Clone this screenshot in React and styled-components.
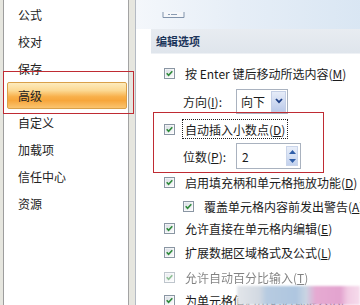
import React from 'react';
import styled, { createGlobalStyle } from 'styled-components';

const Global = createGlobalStyle`
  html, body { margin: 0; padding: 0; }
  body {
    width: 360px;
    height: 305px;
    overflow: hidden;
    background: #e6e6df;
    font-family: "Noto Sans CJK SC", "Noto Sans", sans-serif;
  }
`;

const Frame = styled.div`
  position: relative;
  display: flex;
  width: 360px;
  height: 305px;
  overflow: hidden;
  background: #e6e6df;
`;

const Sidebar = styled.nav`
  box-sizing: border-box;
  margin-left: 3px;
  width: 126px;
  flex: none;
  border-left: 1px solid #9d9d9d;
  border-right: 1px solid #a3a3a3;
  background: #fff;
  display: flex;
  flex-direction: column;
  padding-top: 1px;
`;

const NavItem = styled.div`
  box-sizing: border-box;
  height: 27px;
  display: flex;
  align-items: center;
  font-size: 12px;
  color: #222;
  padding-left: ${(p) => (p.$active ? '10px' : '14px')};
  margin: ${(p) => (p.$active ? '0 1px 0 3px' : '0')};
  border: ${(p) => (p.$active ? '1px solid #d9a04a' : 'none')};
  border-radius: 2px;
  background: ${(p) =>
    p.$active
      ? 'linear-gradient(to bottom, #fdebbd 0%, #fcd993 30%, #f8b04a 55%, #f7a63c 70%, #fac470 100%)'
      : 'transparent'};
`;

const Content = styled.main`
  box-sizing: border-box;
  margin-left: 6px;
  flex: 1;
  border-left: 1px solid #b4bac3;
  background: #fff;
  display: flex;
  flex-direction: column;
`;

const TopBand = styled.div`
  height: 29px;
  flex: none;
  padding-left: 26px;
  background: linear-gradient(to right, #f4f7fb 0%, #e6eef7 45%, #d9e6f3 100%);
`;

const Heading = styled.div`
  height: 25px;
  flex: none;
  margin-left: 15px;
  padding-left: 5px;
  display: flex;
  align-items: center;
  background: linear-gradient(to bottom, #e8ecf1, #dfe5ec);
  border-bottom: 1px solid #eef1f5;
  box-sizing: border-box;
  font-size: 11px;
  font-weight: 700;
  color: #1c355a;
`;

const Options = styled.div`
  display: flex;
  flex-direction: column;
  padding-top: 5px;
`;

const Row = styled.div`
  height: ${(p) => p.$h}px;
  flex: none;
  display: flex;
  align-items: center;
  padding-left: ${(p) => p.$indent}px;
  font-size: 12px;
  color: #1b1b1b;
  white-space: nowrap;
  opacity: ${(p) => (p.$faded ? 0.55 : 1)};
`;

const BoxWrap = styled.span`
  display: inline-flex;
  width: 11px;
  height: 11px;
  margin-right: 10px;
  flex: none;
`;

const Focus = styled.span`
  display: inline-flex;
  align-items: center;
  height: 20px;
  box-sizing: border-box;
  padding: 0 2px;
  margin-left: -3px;
  border: 1px dotted #222;
`;

const FieldLabel = styled.span`
  width: 53px;
  flex: none;
`;

const Select = styled.div`
  box-sizing: border-box;
  width: 52px;
  height: 25px;
  border: 1px solid #a9b2bf;
  background: #fff;
  display: flex;
  align-items: stretch;
  padding: 1px;
`;

const SelectText = styled.span`
  flex: 1;
  display: flex;
  align-items: center;
  padding-left: 3px;
`;

const DropBtn = styled.span`
  width: 15px;
  display: flex;
  align-items: center;
  justify-content: center;
  background: linear-gradient(to bottom, #e6ecf8, #bccbea);
  border: 1px solid #c4cfe6;
  box-sizing: border-box;
`;

const Spin = styled.div`
  box-sizing: border-box;
  width: 65px;
  height: 26px;
  border: 1px solid #a9b2bf;
  background: #fff;
  display: flex;
  align-items: stretch;
  padding: 2px;
`;

const SpinBtns = styled.span`
  width: 12px;
  display: flex;
  flex-direction: column;
  background: linear-gradient(to bottom, #e8eef9, #c3d2ee);
  border: 1px solid #cad5ea;
  box-sizing: border-box;
`;

const SpinHalf = styled.span`
  flex: 1;
  display: flex;
  align-items: center;
  justify-content: center;
`;

const U = styled.span`
  text-decoration: underline;
`;

const RedMark = styled.div`
  position: absolute;
  left: ${(p) => p.$x}px;
  top: ${(p) => p.$y}px;
  width: ${(p) => p.$w}px;
  height: ${(p) => p.$h}px;
  box-sizing: border-box;
  border: 1px solid #bf2b33;
  pointer-events: none;
`;

const Watermark = styled.div`
  position: absolute;
  left: 237px;
  top: 286px;
  width: 123px;
  height: 19px;
  filter: blur(1px);
  background: linear-gradient(
    to right,
    #e3e6ea 0%,
    #d2d9e2 18%,
    #b7cbe1 24%,
    #aec6e0 48%,
    #c9d5e3 56%,
    #e6aad2 64%,
    #e3a3cf 84%,
    #f1cbe3 90%,
    #f6dcec 100%
  );
`;

const Check = () => (
  <BoxWrap>
    <svg width="11" height="11" viewBox="0 0 11 11">
      <defs>
        <linearGradient id="cbg" x1="0" y1="0" x2="1" y2="1">
          <stop offset="0" stopColor="#d9dee5" />
          <stop offset="1" stopColor="#fbfbfc" />
        </linearGradient>
      </defs>
      <rect x="0.5" y="0.5" width="10" height="10" fill="#fff" stroke="#8a96a3" />
      <rect x="1.5" y="1.5" width="8" height="8" fill="url(#cbg)" />
      <path d="M2.7 5.3 L4.6 7.4 L8.3 3.3" fill="none" stroke="#2e8a3a" strokeWidth="1.6" />
    </svg>
  </BoxWrap>
);

const CheckRow = ({ h, indent = 28, faded, children }) => (
  <Row $h={h} $indent={indent} $faded={faded}>
    <Check />
    {children}
  </Row>
);

const navItems = ['公式', '校对', '保存', '高级', '自定义', '加载项', '信任中心', '资源'];

export default function App() {
  return (
    <>
      <Global />
      <Frame>
        <Sidebar>
          {navItems.map((t) => (
            <NavItem key={t} $active={t === '高级'}>
              {t}
            </NavItem>
          ))}
        </Sidebar>
        <Content>
          <TopBand>
            <svg width="24" height="7" viewBox="0 0 24 7">
              <path d="M1 0 V5.5 H22 V0" fill="#f5f7fa" stroke="#8193ab" />
              <path d="M6 2.5 H8 M9 2.5 H15" stroke="#8a9bb2" />
            </svg>
          </TopBand>
          <Heading>编辑选项</Heading>
          <Options>
            <CheckRow h={28}>
              按 Enter 键后移动所选内容(<U>M</U>)
            </CheckRow>
            <Row $h={28} $indent={47}>
              <FieldLabel>
                方向(<U>I</U>):
              </FieldLabel>
              <Select>
                <SelectText>向下</SelectText>
                <DropBtn>
                  <svg width="8" height="6" viewBox="0 0 8 6">
                    <path d="M1 1 L4 4.2 L7 1" fill="none" stroke="#1d3f86" strokeWidth="1.8" />
                  </svg>
                </DropBtn>
              </Select>
            </Row>
            <CheckRow h={28}>
              <Focus>
                自动插入小数点(<U>D</U>)
              </Focus>
            </CheckRow>
            <Row $h={26} $indent={47}>
              <FieldLabel>
                位数(<U>P</U>):
              </FieldLabel>
              <Spin>
                <SelectText>2</SelectText>
                <SpinBtns>
                  <SpinHalf>
                    <svg width="7" height="4" viewBox="0 0 7 4">
                      <path d="M0 4 L3.5 0 L7 4 Z" fill="#2f5ea8" />
                    </svg>
                  </SpinHalf>
                  <SpinHalf>
                    <svg width="7" height="4" viewBox="0 0 7 4">
                      <path d="M0 0 L3.5 4 L7 0 Z" fill="#2f5ea8" />
                    </svg>
                  </SpinHalf>
                </SpinBtns>
              </Spin>
            </Row>
            <CheckRow h={26}>
              启用填充柄和单元格拖放功能(<U>D</U>)
            </CheckRow>
            <CheckRow h={22} indent={47}>
              覆盖单元格内容前发出警告(<U>A</U>)
            </CheckRow>
            <CheckRow h={23}>
              允许直接在单元格内编辑(<U>E</U>)
            </CheckRow>
            <CheckRow h={25}>
              扩展数据区域格式及公式(<U>L</U>)
            </CheckRow>
            <CheckRow h={24} faded>
              允许自动百分比输入(<U>T</U>)
            </CheckRow>
            <CheckRow h={22}>
              为单元格值启用记忆式键入(<U>A</U>)
            </CheckRow>
          </Options>
        </Content>
        <RedMark $x={3} $y={71} $w={131} $h={43} />
        <RedMark $x={153} $y={112} $w={171} $h={61} />
        <Watermark />
      </Frame>
    </>
  );
}
